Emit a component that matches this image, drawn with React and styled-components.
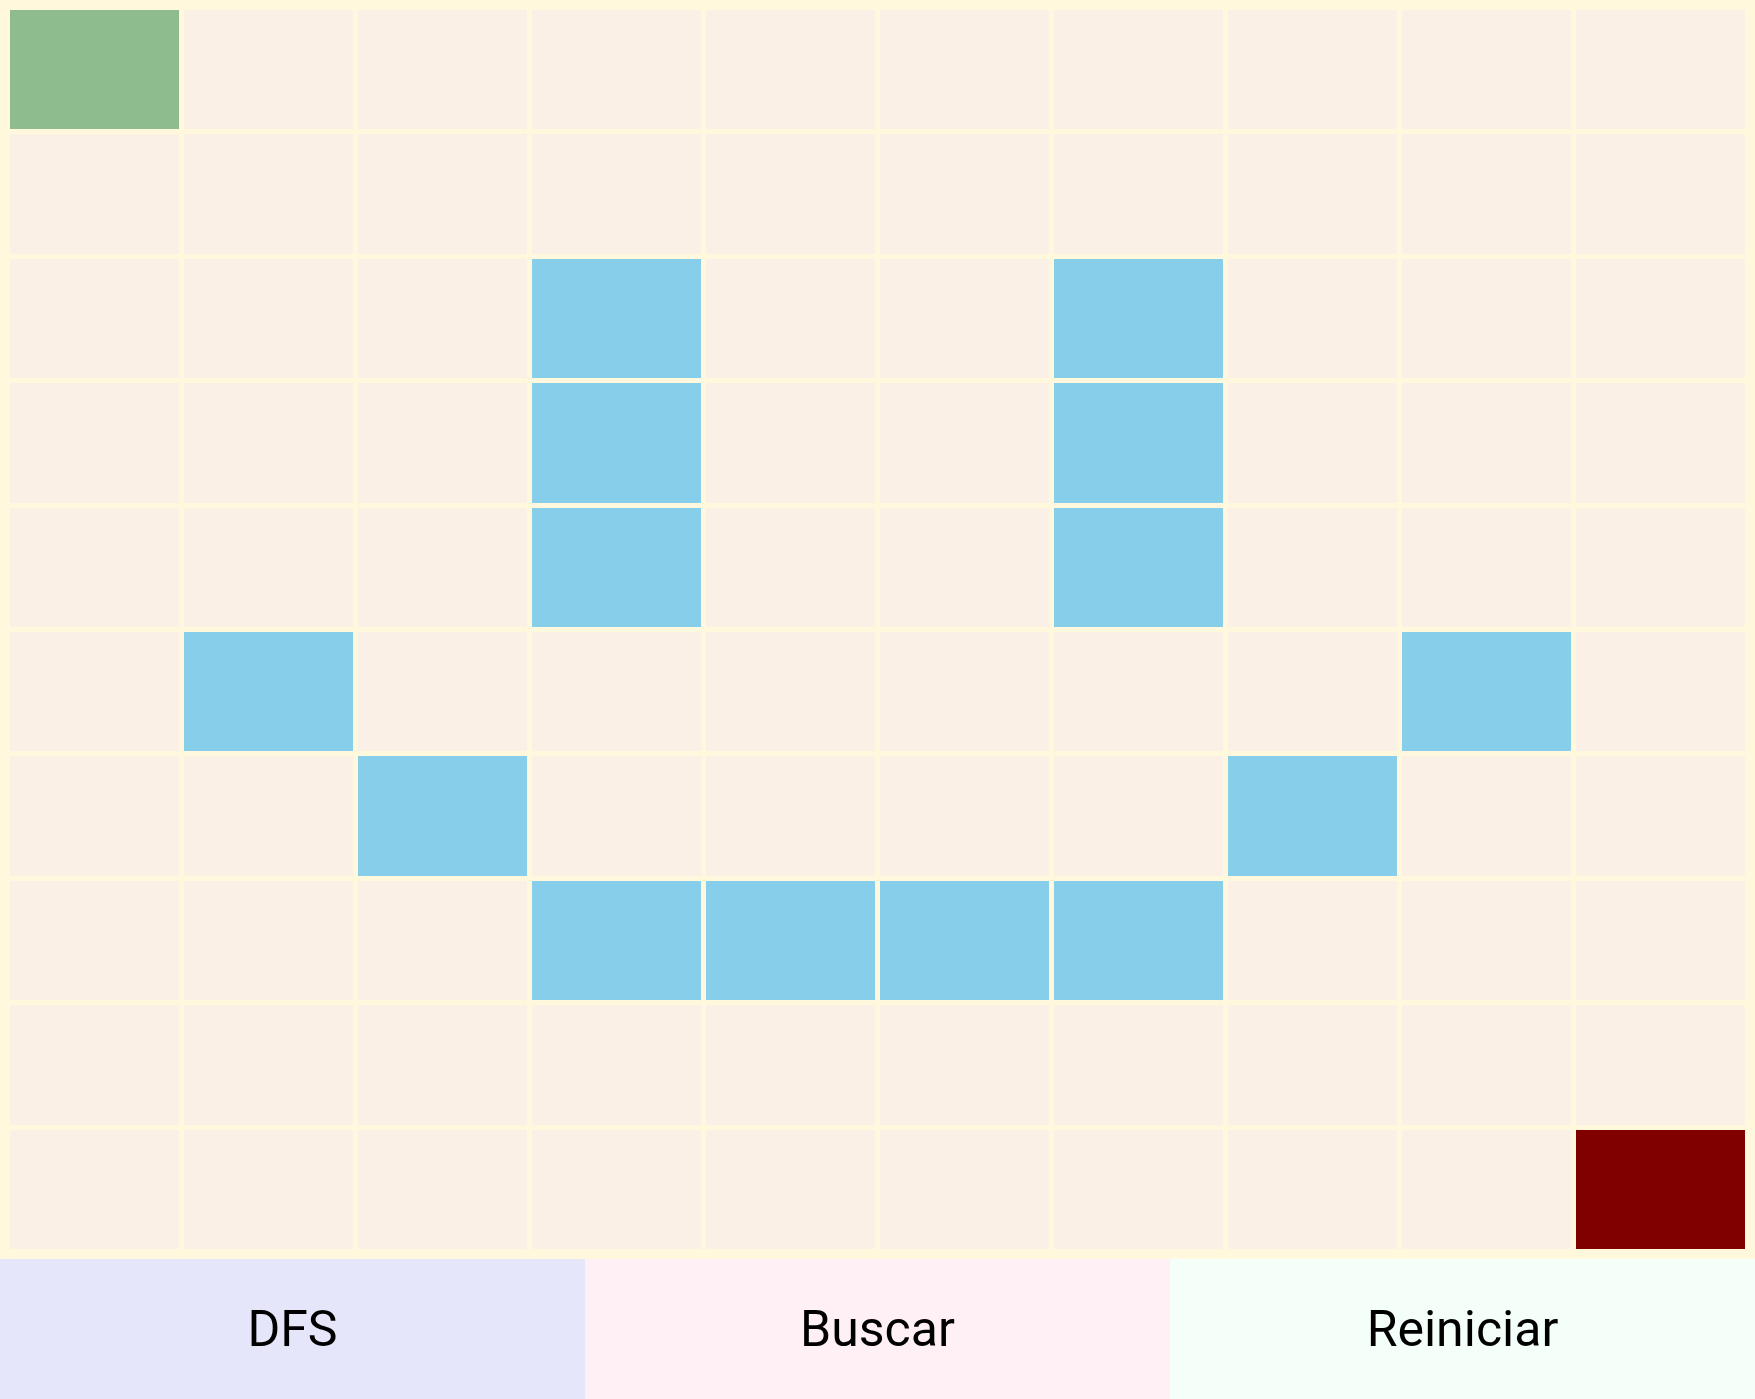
import styled, { createGlobalStyle } from 'styled-components';

const GlobalStyle = createGlobalStyle`
  html, body {
    margin: 0;
    padding: 0;
  }
  body {
    font-family: Roboto, "Liberation Sans", sans-serif;
  }
`;

const ROWS = 10;
const COLS = 10;

const WALLS = [
  [2, 3], [2, 6],
  [3, 3], [3, 6],
  [4, 3], [4, 6],
  [5, 1], [5, 8],
  [6, 2], [6, 7],
  [7, 3], [7, 4], [7, 5], [7, 6],
];

const Page = styled.div`
  height: 100vh;
  display: flex;
  flex-direction: column;
`;

const Board = styled.div`
  flex: 1;
  min-height: 0;
  background: #fff8dc;
  padding: 10px;
  display: grid;
  grid-template-columns: repeat(${COLS}, 1fr);
  grid-template-rows: repeat(${ROWS}, 1fr);
  gap: 5px;
`;

const cellColors = {
  start: '#8fbc8f',
  end: '#800000',
  wall: '#87ceeb',
  empty: '#faf0e6',
};

const Cell = styled.div`
  background: ${props => cellColors[props.$kind]};
`;

const Controls = styled.div`
  height: 10vh;
  display: flex;
`;

const Button = styled.button`
  flex: 1;
  border: none;
  margin: 0;
  padding: 0;
  background: ${props => props.$bg};
  font-family: Roboto, "Liberation Sans", sans-serif;
  font-size: 50px;
  color: #000;
  cursor: pointer;
`;

const kindOf = (r, c) => {
  if (r === 0 && c === 0) return 'start';
  if (r === ROWS - 1 && c === COLS - 1) return 'end';
  if (WALLS.some(([wr, wc]) => wr === r && wc === c)) return 'wall';
  return 'empty';
};

const App = () => {
  const cells = [];
  for (let r = 0; r < ROWS; r++) {
    for (let c = 0; c < COLS; c++) {
      cells.push(<Cell key={`${r}-${c}`} $kind={kindOf(r, c)} />);
    }
  }

  return (
    <Page>
      <GlobalStyle />
      <Board>{cells}</Board>
      <Controls>
        <Button $bg="#e6e6fa">DFS</Button>
        <Button $bg="#fff0f5">Buscar</Button>
        <Button $bg="#f5fffa">Reiniciar</Button>
      </Controls>
    </Page>
  );
};

export default App;
